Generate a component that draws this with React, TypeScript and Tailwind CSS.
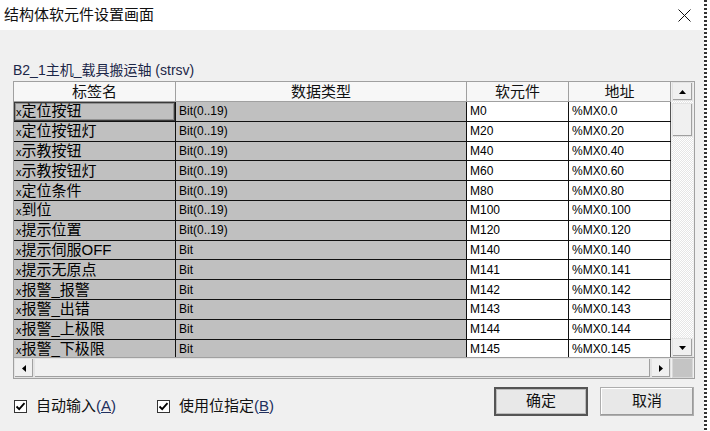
import React from "react";

const rows = [
  ["定位按钮", "Bit(0..19)", "M0", "%MX0.0"],
  ["定位按钮灯", "Bit(0..19)", "M20", "%MX0.20"],
  ["示教按钮", "Bit(0..19)", "M40", "%MX0.40"],
  ["示教按钮灯", "Bit(0..19)", "M60", "%MX0.60"],
  ["定位条件", "Bit(0..19)", "M80", "%MX0.80"],
  ["到位", "Bit(0..19)", "M100", "%MX0.100"],
  ["提示位置", "Bit(0..19)", "M120", "%MX0.120"],
  ["提示伺服OFF", "Bit", "M140", "%MX0.140"],
  ["提示无原点", "Bit", "M141", "%MX0.141"],
  ["报警_报警", "Bit", "M142", "%MX0.142"],
  ["报警_出错", "Bit", "M143", "%MX0.143"],
  ["报警_上极限", "Bit", "M144", "%MX0.144"],
  ["报警_下极限", "Bit", "M145", "%MX0.145"],
];

function Arrow({ dir }: { dir: "up" | "down" | "left" | "right" }) {
  const pts = {
    up: "0,4 7,4 3.5,0",
    down: "0,0 7,0 3.5,4",
    left: "4,0 4,7 0,3.5",
    right: "0,0 0,7 4,3.5",
  }[dir];
  const vert = dir === "up" || dir === "down";
  return (
    <svg width={vert ? 7 : 4} height={vert ? 4 : 7} viewBox={vert ? "0 0 7 4" : "0 0 4 7"}>
      <polygon points={pts} fill="#000" />
    </svg>
  );
}

function ScrollBtn({ dir, className }: { dir: "up" | "down" | "left" | "right"; className: string }) {
  return (
    <div
      className={`flex items-center justify-center bg-[#f0f0f0] border border-[#e3e3e3] shadow-[inset_-1px_-1px_#a0a0a0] ${className}`}
    >
      <Arrow dir={dir} />
    </div>
  );
}

function Check({ label, hot }: { label: string; hot: string }) {
  return (
    <div className="flex items-center">
      <div className="w-[13px] h-[13px] bg-white border border-[#333] flex items-center justify-center">
        <svg width="11" height="11" viewBox="0 0 11 11">
          <path d="M1.5 5.5 L4.2 8.2 L9.5 2.2" stroke="#000" strokeWidth="1.8" fill="none" />
        </svg>
      </div>
      <span className="ml-[9px] text-[15px] leading-[18px] text-[#111]">
        {label}
        <span className="text-[#22305e]">
          (<span className="underline">{hot}</span>)
        </span>
      </span>
    </div>
  );
}

export default function App() {
  return (
    <div className="w-[710px] h-[431px] flex bg-white overflow-hidden font-['Liberation_Sans','Noto_Sans_CJK_SC',sans-serif] text-black">
      <div className="w-[704px] h-full flex flex-col">
        {/* Title bar */}
        <div className="h-[30px] bg-white flex items-center justify-between pl-[4px] pr-[13px]">
          <span className="text-[15px] leading-[18px] text-[#111]">结构体软元件设置画面</span>
          <svg width="13" height="13" viewBox="0 0 13 13">
            <path d="M0.5 0.5 L12.5 12.5 M12.5 0.5 L0.5 12.5" stroke="#111" strokeWidth="1" />
          </svg>
        </div>

        <div className="flex-1 bg-[#f0f0f0] pt-[32px]">
          <div className="pl-[13px] text-[14px] leading-[16px] text-[#1c2748]">
            B2_1主机_载具搬运轴 (strsv)
          </div>

          {/* Grid */}
          <div className="ml-[13px] mt-[3px] w-[682px] border border-[#a0a0a0] bg-[#f0f0f0]">
            <div className="flex">
              <div className="w-[657px] h-[275px] overflow-hidden">
                <div className="flex h-[20px] border-b border-[#a0a0a0] bg-[#f7f7f7] text-[15px] leading-[19px] text-[#111]">
                  <div className="w-[162px] text-center border-r border-[#a0a0a0]">标签名</div>
                  <div className="w-[291px] text-center border-r border-[#a0a0a0]">数据类型</div>
                  <div className="w-[102px] text-center border-r border-[#a0a0a0]">软元件</div>
                  <div className="w-[102px] text-center border-r border-[#a0a0a0]">地址</div>
                </div>
                {rows.map((r, i) => (
                  <div key={i} className="flex h-[19.8px] border-b border-[#111]">
                    <div
                      className={`w-[162px] bg-[#c0c0c0] border-r border-[#111] pl-[2px] flex items-center whitespace-nowrap ${
                        i === 0 ? "shadow-[inset_0_0_0_1px_#3a3a3a,inset_0_0_0_2px_#909090]" : ""
                      }`}
                    >
                      <span className="text-[11px] leading-[14px] mt-[2px]">x</span>
                      <span className="text-[15px] leading-[18px]">{r[0]}</span>
                    </div>
                    <div className="w-[291px] bg-[#c0c0c0] border-r border-[#111] pl-[3px] flex items-center text-[12px]">
                      {r[1]}
                    </div>
                    <div className="w-[102px] bg-white border-r border-[#111] pl-[3px] flex items-center text-[12px]">
                      {r[2]}
                    </div>
                    <div className="w-[102px] bg-white border-r border-[#555] pl-[3px] flex items-center text-[12px]">
                      {r[3]}
                    </div>
                  </div>
                ))}
              </div>

              {/* Vertical scrollbar */}
              <div className="w-[23px] h-[275px] px-[1px] flex flex-col">
                <ScrollBtn dir="up" className="h-[19px]" />
                <div className="flex-1 flex flex-col bg-[repeating-conic-gradient(#ffffff_0_25%,#e6e6e6_0_50%)] bg-[length:2px_2px]">
                  <div className="mt-[2px] h-[34px] bg-[#f0f0f0] border border-[#e3e3e3] shadow-[inset_-1px_-1px_#a0a0a0]" />
                </div>
                <ScrollBtn dir="down" className="h-[19px]" />
              </div>
            </div>

            {/* Horizontal scrollbar */}
            <div className="flex h-[21px] border-t border-[#a0a0a0]">
              <div className="w-[657px] flex">
                <ScrollBtn dir="left" className="w-[20px]" />
                <div className="flex-1 bg-[#f0f0f0] border border-[#e3e3e3] shadow-[inset_-1px_-1px_#a0a0a0]" />
                <ScrollBtn dir="right" className="w-[20px]" />
              </div>
              <div className="w-[23px] px-[1px]">
                <div className="h-full bg-[#c4c4c4] border border-[#d8d8d8]" />
              </div>
            </div>
          </div>

          {/* Bottom controls */}
          <div className="flex items-start pl-[14px] mt-[8px]">
            <div className="flex mt-[10px]">
              <Check label="自动输入" hot="A" />
              <div className="ml-[41px]">
                <Check label="使用位指定" hot="B" />
              </div>
            </div>
            <div className="ml-auto mr-[10px] flex gap-[12px]">
              <button className="w-[94px] h-[29px] bg-[#e8e8e8] border-2 border-[#555] shadow-[inset_0_0_0_1px_#bcbcbc] text-[15px] text-[#111]">
                确定
              </button>
              <button className="w-[94px] h-[29px] bg-[#e8e8e8] border border-[#adadad] shadow-[inset_-1px_-1px_#9a9a9a,inset_1px_1px_#fff] text-[15px] text-[#111]">
                取消
              </button>
            </div>
          </div>
        </div>
      </div>
      <div className="w-[3px] h-full bg-[repeating-linear-gradient(to_bottom,#333_0_2px,#fff_2px_4px)]" />
      <div className="w-[3px] h-full bg-white" />
    </div>
  );
}
